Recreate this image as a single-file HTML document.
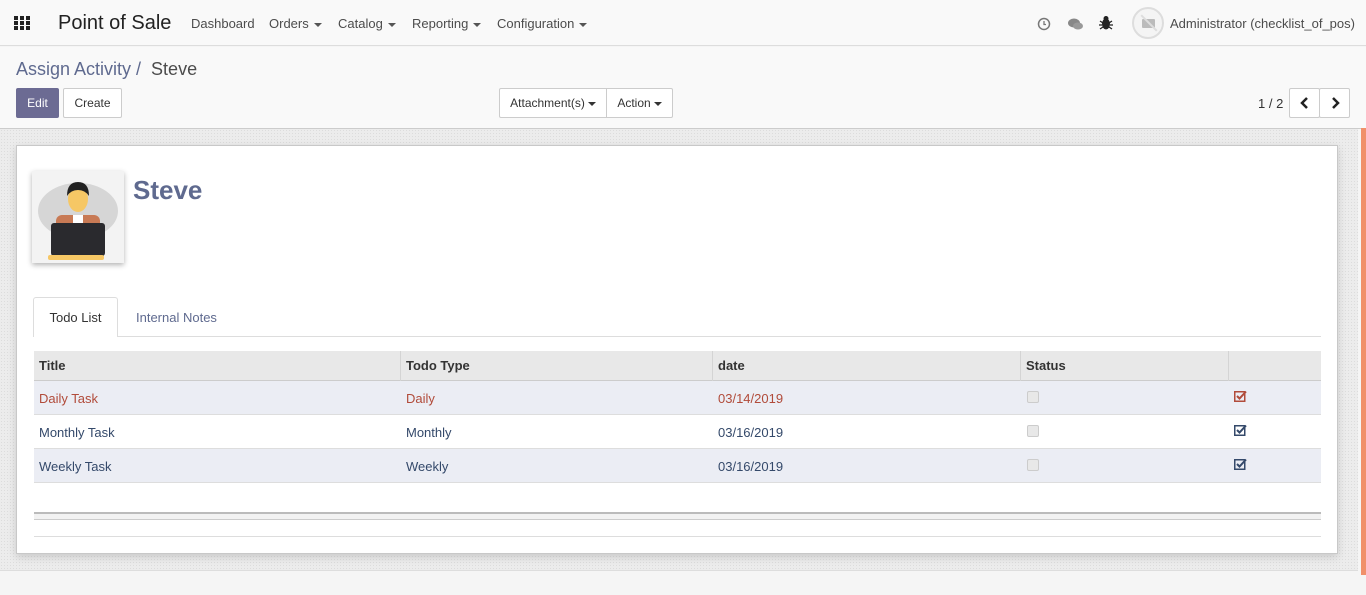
<!DOCTYPE html>
<html><head><meta charset="utf-8"><style>
*{box-sizing:border-box;margin:0;padding:0}
body{width:1366px;height:595px;overflow:hidden;font-family:"Liberation Sans",sans-serif;font-size:13px;color:#4c4c4c;background:#f5f5f5;position:relative}
.nav{position:absolute;left:0;top:0;width:1366px;height:46px;background:#f9f9f9;border-bottom:1px solid #ddd}
.nav span{position:absolute;top:16px;color:#4c4c4c}
.cp{position:absolute;left:0;top:47px;width:1366px;height:82px;background:#f9f9f9;border-bottom:1px solid #ccc}
.btn{position:absolute;height:30px;border:1px solid #ccc;background:#fff;font-size:12px;line-height:28px;text-align:center;color:#333;border-radius:2px}
.main{position:absolute;left:0;top:129px;width:1358px;height:442px;background:#ececec;border-bottom:1px solid #ddd;background-image:radial-gradient(#dcdcdc 0.6px,transparent 0.6px);background-size:3px 3px}
.sheet{position:absolute;left:16px;top:145px;width:1322px;height:409px;background:#fff;border:1px solid #c8c8c8;box-shadow:0 3px 8px rgba(0,0,0,.15)}
.row{position:absolute;left:34px;width:1287px;height:34px;border-bottom:1px solid #ddd}
.row span{position:absolute;top:10px;font-size:13px}
.tri{display:inline-block;border-left:4px solid transparent;border-right:4px solid transparent;border-top:4px solid #555;vertical-align:middle;margin-left:5px}
.cb{position:absolute;left:993px;top:10px;width:12px;height:12px;border:1px solid #ccc;background:#e8e8e8;border-radius:2px}
.ck{position:absolute;left:1200px;top:9px}
</style></head><body>
<div class="nav">
<svg style="position:absolute;left:14px;top:16px" width="18" height="14"><g fill="#222"><rect x="0" y="0" width="4" height="4"/><rect x="6" y="0" width="4" height="4"/><rect x="12" y="0" width="4" height="4"/><rect x="0" y="5" width="4" height="4"/><rect x="6" y="5" width="4" height="4"/><rect x="12" y="5" width="4" height="4"/><rect x="0" y="10" width="4" height="4"/><rect x="6" y="10" width="4" height="4"/><rect x="12" y="10" width="4" height="4"/></g></svg>
<span style="left:58px;top:12px;font-size:20px;color:#222">Point of Sale</span>
<span style="left:191px">Dashboard</span>
<span style="left:269px">Orders<i class="tri"></i></span>
<span style="left:338px">Catalog<i class="tri"></i></span>
<span style="left:412px">Reporting<i class="tri"></i></span>
<span style="left:497px">Configuration<i class="tri"></i></span>
<svg style="position:absolute;left:1037px;top:17px" width="14" height="14"><circle cx="7" cy="7" r="5.5" fill="none" stroke="#777" stroke-width="1.5"/><path d="M7 4v3.5h2" stroke="#777" fill="none" stroke-width="1.3"/></svg>
<svg style="position:absolute;left:1067px;top:17px" width="17" height="14"><ellipse cx="7" cy="6" rx="6" ry="4.5" fill="#888"/><ellipse cx="11" cy="9" rx="5" ry="3.5" fill="#999"/></svg>
<svg style="position:absolute;left:1099px;top:15px" width="14" height="16"><ellipse cx="7" cy="9" rx="4" ry="5.5" fill="#222"/><circle cx="7" cy="3.5" r="2.5" fill="#222"/><path d="M1 6l3 2M13 6l-3 2M0 10h3M14 10h-3M1 14l3-2M13 14l-3-2" stroke="#222" stroke-width="1.3"/></svg>
<div style="position:absolute;left:1132px;top:7px;width:32px;height:32px;border-radius:50%;border:2px solid #ddd;background:#f4f4f4"><div style="position:absolute;left:8px;top:10px;width:13px;height:9px;background:#bbb;border-radius:1px"></div><div style="position:absolute;left:4px;top:13px;width:22px;height:2px;background:#ddd;transform:rotate(45deg)"></div></div>
<span style="left:1170px">Administrator (checklist_of_pos)</span>
</div>
<div class="cp">
<div style="position:absolute;left:16px;top:12px;font-size:18px;color:#5f6a8f">Assign Activity / <span style="color:#4c4c4c">&nbsp;Steve</span></div>
<div class="btn" style="left:16px;top:41px;width:43px;background:#6c6b93;border-color:#6c6b93;color:#fff">Edit</div>
<div class="btn" style="left:63px;top:41px;width:59px">Create</div>
<div class="btn" style="left:499px;top:41px;width:108px;border-radius:2px 0 0 2px">Attachment(s)<i class="tri" style="margin-left:3px;border-top-color:#333"></i></div>
<div class="btn" style="left:606px;top:41px;width:67px;border-radius:0 2px 2px 0">Action<i class="tri" style="margin-left:3px;border-top-color:#333"></i></div>
<div style="position:absolute;left:1258px;top:49px;color:#333">1 / 2</div>
<div class="btn" style="left:1289px;top:41px;width:31px"><svg width="10" height="12" style="margin-top:8px"><path d="M7 1L2 6l5 5" stroke="#222" stroke-width="2.5" fill="none"/></svg></div>
<div class="btn" style="left:1319px;top:41px;width:31px"><svg width="10" height="12" style="margin-top:8px"><path d="M3 1l5 5-5 5" stroke="#222" stroke-width="2.5" fill="none"/></svg></div>
</div>
<div class="main"></div>
<div style="position:absolute;left:1361px;top:128px;width:5px;height:447px;background:#f0906a"></div>
<div class="sheet"></div>
<div style="position:absolute;left:32px;top:171px;width:92px;height:92px;background:#f3f3f3;box-shadow:0 2px 5px rgba(0,0,0,.3)">
<svg width="92" height="92"><ellipse cx="46" cy="40" rx="40" ry="28" fill="#d6d6d6"/><rect x="24" y="44" width="44" height="30" rx="6" fill="#c87a55"/><rect x="41" y="44" width="10" height="18" fill="#fff"/><ellipse cx="46" cy="28" rx="10" ry="13" fill="#f6c765"/><path d="M35 25q0-14 11-14q11 0 11 14q-4-6-11-6q-7 0-11 6z" fill="#222"/><rect x="19" y="52" width="54" height="33" rx="3" fill="#2a2a2e"/><rect x="16" y="84" width="56" height="5" rx="2" fill="#f6c765"/></svg></div>
<div style="position:absolute;left:133px;top:175px;font-size:26px;font-weight:bold;color:#5f6a8f">Steve</div>
<div style="position:absolute;left:33px;top:336px;width:1288px;border-top:1px solid #ddd"></div>
<div style="position:absolute;left:33px;top:297px;width:85px;height:40px;background:#fff;border:1px solid #ddd;border-bottom:none;border-radius:3px 3px 0 0;text-align:center;line-height:40px;color:#333">Todo List</div>
<div style="position:absolute;left:136px;top:310px;color:#5f6a8f">Internal Notes</div>
<div class="row" style="top:351px;height:31px;background:#e8e8e8;border-bottom:2px solid #ccc;font-weight:bold;color:#333">
<span style="left:5px;top:7px">Title</span><span style="left:372px;top:7px">Todo Type</span><span style="left:684px;top:7px">date</span><span style="left:992px;top:7px">Status</span>
<i style="position:absolute;left:366px;top:0;height:30px;border-left:1px solid #d4d4d4"></i><i style="position:absolute;left:678px;top:0;height:30px;border-left:1px solid #d4d4d4"></i><i style="position:absolute;left:986px;top:0;height:30px;border-left:1px solid #d4d4d4"></i><i style="position:absolute;left:1194px;top:0;height:30px;border-left:1px solid #d4d4d4"></i></div>
<div class="row" style="top:381px;background:#ebedf4;color:#b14b3a"><span style="left:5px">Daily Task</span><span style="left:372px">Daily</span><span style="left:684px">03/14/2019</span><i class="cb"></i><svg class="ck" width="13" height="12"><rect x="0.75" y="1.75" width="10" height="9.5" fill="none" stroke="#b14b3a" stroke-width="1.5"/><path d="M3 6l2.5 2.5L12 1.5" stroke="#b14b3a" stroke-width="2" fill="none"/></svg></div>
<div class="row" style="top:415px;color:#34496a"><span style="left:5px">Monthly Task</span><span style="left:372px">Monthly</span><span style="left:684px">03/16/2019</span><i class="cb"></i><svg class="ck" width="13" height="12"><rect x="0.75" y="1.75" width="10" height="9.5" fill="none" stroke="#34496a" stroke-width="1.5"/><path d="M3 6l2.5 2.5L12 1.5" stroke="#34496a" stroke-width="2" fill="none"/></svg></div>
<div class="row" style="top:449px;background:#ebedf4;color:#34496a"><span style="left:5px">Weekly Task</span><span style="left:372px">Weekly</span><span style="left:684px">03/16/2019</span><i class="cb"></i><svg class="ck" width="13" height="12"><rect x="0.75" y="1.75" width="10" height="9.5" fill="none" stroke="#34496a" stroke-width="1.5"/><path d="M3 6l2.5 2.5L12 1.5" stroke="#34496a" stroke-width="2" fill="none"/></svg></div>
<div style="position:absolute;left:34px;top:512px;width:1287px;height:8px;border-top:2px solid #bbb;border-bottom:1px solid #ccc;background:#f2f2f2"></div>
<div style="position:absolute;left:34px;top:536px;width:1287px;border-top:1px solid #ddd"></div>
</body></html>
